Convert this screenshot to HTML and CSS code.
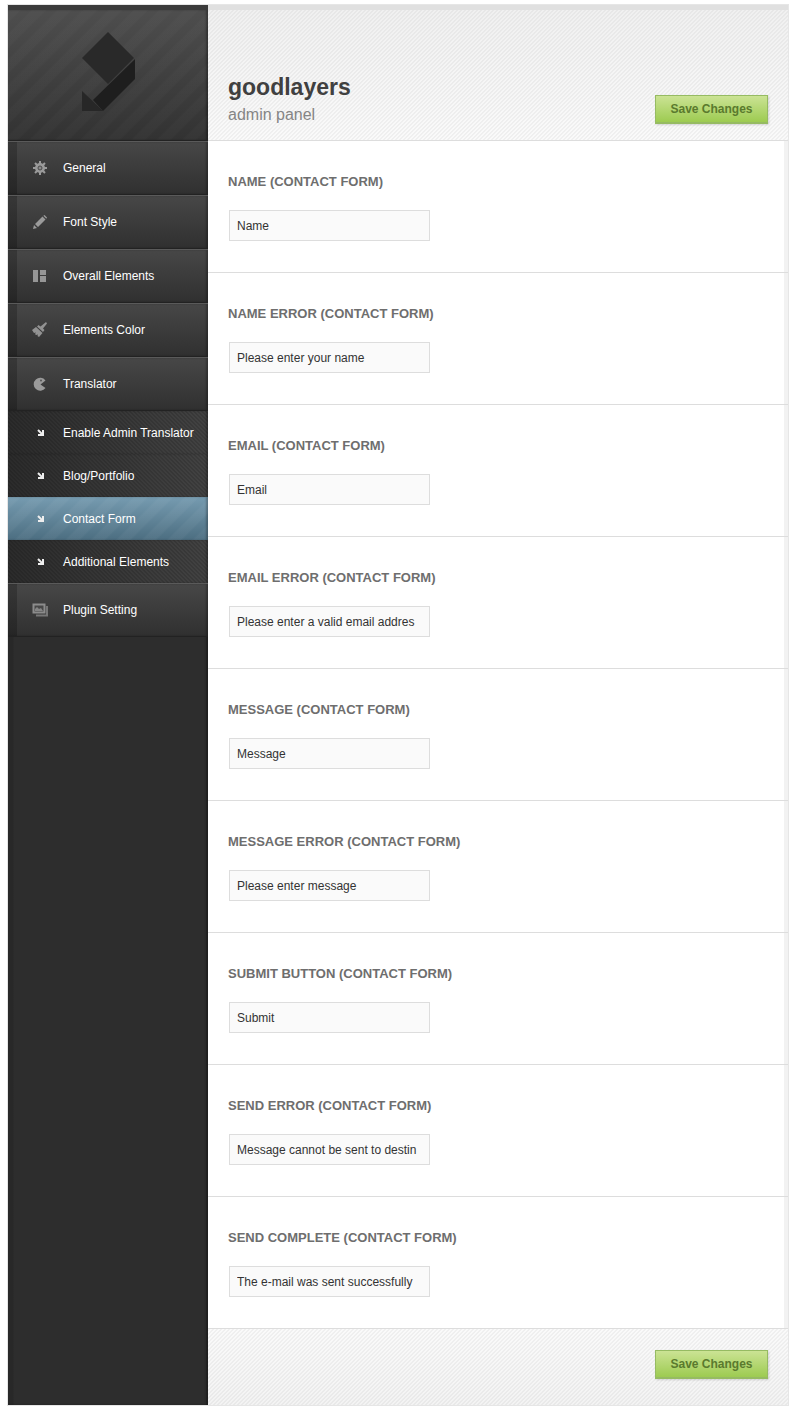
FILE: index.html
```html
<!DOCTYPE html>
<html lang="en">
<head>
    <meta charset="UTF-8">
    <meta name="viewport" content="width=device-width, initial-scale=1.0">
    <title>goodlayers admin panel</title>
    <link rel="stylesheet" href="styles.css">
</head>
<body>
    <form class="panel" action="#" method="post">
        <aside class="sidebar">
            <div class="logo">
                <svg width="54" height="80" viewBox="0 0 54 80" role="img" aria-label="goodlayers">
                    <path d="M26 0 52 26 26 52 0 26z" fill="#292929"/>
                    <path d="M53 27v20L21 79 11 68z" fill="#1e1e1e"/>
                    <path d="M0 59v20h21z" fill="#272727"/>
                </svg>
            </div>
            <nav>
                <ul class="menu">
                    <li><a class="menu-item" href="#">
                        <svg class="icon" width="16" height="16" viewBox="0 0 16 16"><g stroke="#9a9a9a" stroke-width="2"><path d="M8 1v14M1 8h14M3 3l10 10M13 3 3 13"/></g><circle cx="8" cy="8" r="5" fill="#9a9a9a"/><circle cx="8" cy="8" r="2" fill="#8a8a8a" stroke="#4a4a4a"/></svg>
                        General</a></li>
                    <li><a class="menu-item" href="#">
                        <svg class="icon" width="16" height="16" viewBox="0 0 16 16"><path d="M1 15l1-4 3 3zM3 10l7.500-7.500 3 3L6 13zM11.300 1.700 12.500 1 15 3.500l-.7 1.200z" fill="#9a9a9a"/></svg>
                        Font Style</a></li>
                    <li><a class="menu-item" href="#">
                        <svg class="icon" width="16" height="16" viewBox="0 0 16 16"><path d="M1 2h5v12H1zM8 2h6v5H8zM8 8h6v6H8z" fill="#969696"/></svg>
                        Overall Elements</a></li>
                    <li><a class="menu-item" href="#">
                        <svg class="icon" width="16" height="16" viewBox="0 0 16 16"><path d="M14 0l1 1.500-4 5 1.500 1.500-1.500 2-6-5.500L6.500 3l2 1.500zM4 5l6.500 6L7 15l-1.500-1 .5-1.500L4 13l-1-1 1-1.500L2 11 0 8z" fill="#929292"/></svg>
                        Elements Color</a></li>
                    <li>
                        <a class="menu-item" href="#">
                        <svg class="icon" width="16" height="16" viewBox="0 0 16 16"><path d="M13.500 4.500A6.500 6.500 0 1 0 13.500 12L8.500 8.500z" fill="#9a9a9a"/><circle cx="9" cy="4.500" r="1" fill="#555"/></svg>
                        Translator</a>
                        <ul class="submenu">
                            <li><a href="#"><svg class="arrow" width="8" height="8" viewBox="0 0 8 8"><path d="M1 1l4 4M6 1v5H1" /></svg>Enable Admin Translator</a></li>
                            <li><a href="#"><svg class="arrow" width="8" height="8" viewBox="0 0 8 8"><path d="M1 1l4 4M6 1v5H1" /></svg>Blog/Portfolio</a></li>
                            <li><a class="active" href="#"><svg class="arrow" width="8" height="8" viewBox="0 0 8 8"><path d="M1 1l4 4M6 1v5H1" /></svg>Contact Form</a></li>
                            <li><a href="#"><svg class="arrow" width="8" height="8" viewBox="0 0 8 8"><path d="M1 1l4 4M6 1v5H1" /></svg>Additional Elements</a></li>
                        </ul>
                    </li>
                    <li><a class="menu-item" href="#">
                        <svg class="icon" width="16" height="16" viewBox="0 0 16 16"><path d="M4 13.500h11V4" fill="none" stroke="#777" stroke-width="2"/><path d="M1.500 2.500h11v8h-11z" fill="#484848" stroke="#8c8c8c" stroke-width="2"/><path d="M3 9V7l2-2 2 2 2-1 2 3z" fill="#858585"/></svg>
                        Plugin Setting</a></li>
                </ul>
            </nav>
        </aside>

        <main class="content">
            <header class="panel-header">
                <div>
                    <h1>goodlayers</h1>
                    <p>admin panel</p>
                </div>
                <button class="save" type="submit">Save Changes</button>
            </header>

            <div class="row">
                <label for="name">NAME (CONTACT FORM)</label>
                <input type="text" id="name" name="name" value="Name">
            </div>
            <div class="row">
                <label for="name-error">NAME ERROR (CONTACT FORM)</label>
                <input type="text" id="name-error" name="name-error" value="Please enter your name">
            </div>
            <div class="row">
                <label for="email">EMAIL (CONTACT FORM)</label>
                <input type="text" id="email" name="email" value="Email">
            </div>
            <div class="row">
                <label for="email-error">EMAIL ERROR (CONTACT FORM)</label>
                <input type="text" id="email-error" name="email-error" value="Please enter a valid email addres">
            </div>
            <div class="row">
                <label for="message">MESSAGE (CONTACT FORM)</label>
                <input type="text" id="message" name="message" value="Message">
            </div>
            <div class="row">
                <label for="message-error">MESSAGE ERROR (CONTACT FORM)</label>
                <input type="text" id="message-error" name="message-error" value="Please enter message">
            </div>
            <div class="row">
                <label for="submit-button">SUBMIT BUTTON (CONTACT FORM)</label>
                <input type="text" id="submit-button" name="submit-button" value="Submit">
            </div>
            <div class="row">
                <label for="send-error">SEND ERROR (CONTACT FORM)</label>
                <input type="text" id="send-error" name="send-error" value="Message cannot be sent to destin">
            </div>
            <div class="row">
                <label for="send-complete">SEND COMPLETE (CONTACT FORM)</label>
                <input type="text" id="send-complete" name="send-complete" value="The e-mail was sent successfully">
            </div>

            <footer class="panel-footer">
                <button class="save" type="submit">Save Changes</button>
            </footer>
        </main>
    </form>
</body>
</html>
```
FILE: styles.css
```css
* {
    box-sizing: border-box;
}
body {
    margin: 0;
    padding: 4px 10px 11px 7px;
    background-color: #fff;
    font-family: "Liberation Sans", Arial, sans-serif;
    font-size: 12px;
}
h1, p, ul {
    margin: 0;
    padding: 0;
}
ul {
    list-style: none;
}
.panel {
    display: flex;
    border: 1px solid #e6e6e6;
}

/* sidebar */
.sidebar {
    flex: 0 0 200px;
    background: linear-gradient(to right, #282828 5px, #2d2d2d 6px);
    box-shadow: inset -2px 0 2px #1f1f1f;
}
.logo {
    height: 136px;
    padding: 22px 0 0 74px;
    border-top: 5px solid #3b3b3b;
    border-bottom: 1px solid #222;
    background: repeating-linear-gradient(135deg, rgba(255,255,255,0.02) 0 8px, transparent 10px 16px, rgba(255,255,255,0.02) 18px),
        linear-gradient(#4e4e4e, #323232);
    box-shadow: inset -2px 0 2px rgba(0,0,0,0.3);
}
.menu-item, .submenu a {
    display: flex;
    align-items: center;
    color: #fff;
    text-decoration: none;
}
.menu-item {
    gap: 15px;
    height: 54px;
    padding-left: 24px;
    border-top: 1px solid #5a5a5a;
    border-bottom: 1px solid #222;
    background: linear-gradient(to right, rgba(0,0,0,0.22) 9px, transparent 9px),
        linear-gradient(#474747, #303030);
    box-shadow: inset -2px 0 2px rgba(0,0,0,0.25);
}
.submenu a {
    gap: 18px;
    height: 43px;
    padding-left: 29px;
    background: linear-gradient(45deg, rgba(0,0,0,0.12) 25%, transparent 25% 50%, rgba(0,0,0,0.12) 50% 75%, transparent 75%) 0 0 / 4px 4px,
        linear-gradient(to right, #2b2b2b, #424242);
    box-shadow: inset -2px 0 2px rgba(0,0,0,0.25);
}
.submenu .active {
    background: repeating-linear-gradient(135deg, rgba(255,255,255,0.04) 0 8px, transparent 10px 16px, rgba(255,255,255,0.04) 18px),
        linear-gradient(#769bb0, #4c6e81);
}
.arrow {
    fill: none;
    stroke: #eee;
    stroke-width: 2;
}

/* content */
.content {
    flex: 1;
    min-width: 0;
}
.panel-header, .panel-footer {
    display: flex;
    align-items: flex-end;
}
.panel-header {
    justify-content: space-between;
    height: 136px;
    padding: 0 20px 15px;
    border-top: 5px solid #e0e0e0;
    border-bottom: 1px solid #ddd;
    background: linear-gradient(135deg, rgba(0,0,0,0.04) 25%, transparent 25% 50%, rgba(0,0,0,0.04) 50% 75%, transparent 75%) 0 0 / 4px 4px,
        linear-gradient(#f0f0f0, #fafafa);
}
.panel-header .save {
    margin-bottom: 1px;
}
h1 {
    font-size: 23px;
    line-height: 36px;
    color: #404040;
}
.panel-header p {
    font-size: 16px;
    line-height: 20px;
    color: #858585;
}
.row {
    padding: 31px 20px;
    border-bottom: 1px solid #ddd;
    background: linear-gradient(to left, #f2f2f2 4px, #fff 4px);
}
.row label {
    display: block;
    margin-bottom: 18px;
    font-size: 13px;
    font-weight: bold;
    line-height: 20px;
    color: #6e6e6e;
}
.row input {
    display: block;
    width: 201px;
    height: 31px;
    margin-left: 1px;
    padding: 0 7px;
    border: 1px solid #ddd;
    background-color: #fafafa;
    color: #333;
    font: inherit;
}
.panel-footer {
    justify-content: flex-end;
    padding: 21px 20px 26px;
    background: linear-gradient(135deg, rgba(0,0,0,0.04) 25%, transparent 25% 50%, rgba(0,0,0,0.04) 50% 75%, transparent 75%) 0 0 / 4px 4px,
        linear-gradient(#fafafa, #f3f3f3);
}
.save {
    width: 113px;
    height: 29px;
    padding: 0;
    border: 1px solid #96bb62;
    border-bottom-width: 2px;
    background: linear-gradient(#cbe394, #9dcb51);
    box-shadow: 1px 1px 2px rgba(0,0,0,0.15);
    color: #5a7a2e;
    font: bold 12px "Liberation Sans", Arial, sans-serif;
    cursor: pointer;
}
```
